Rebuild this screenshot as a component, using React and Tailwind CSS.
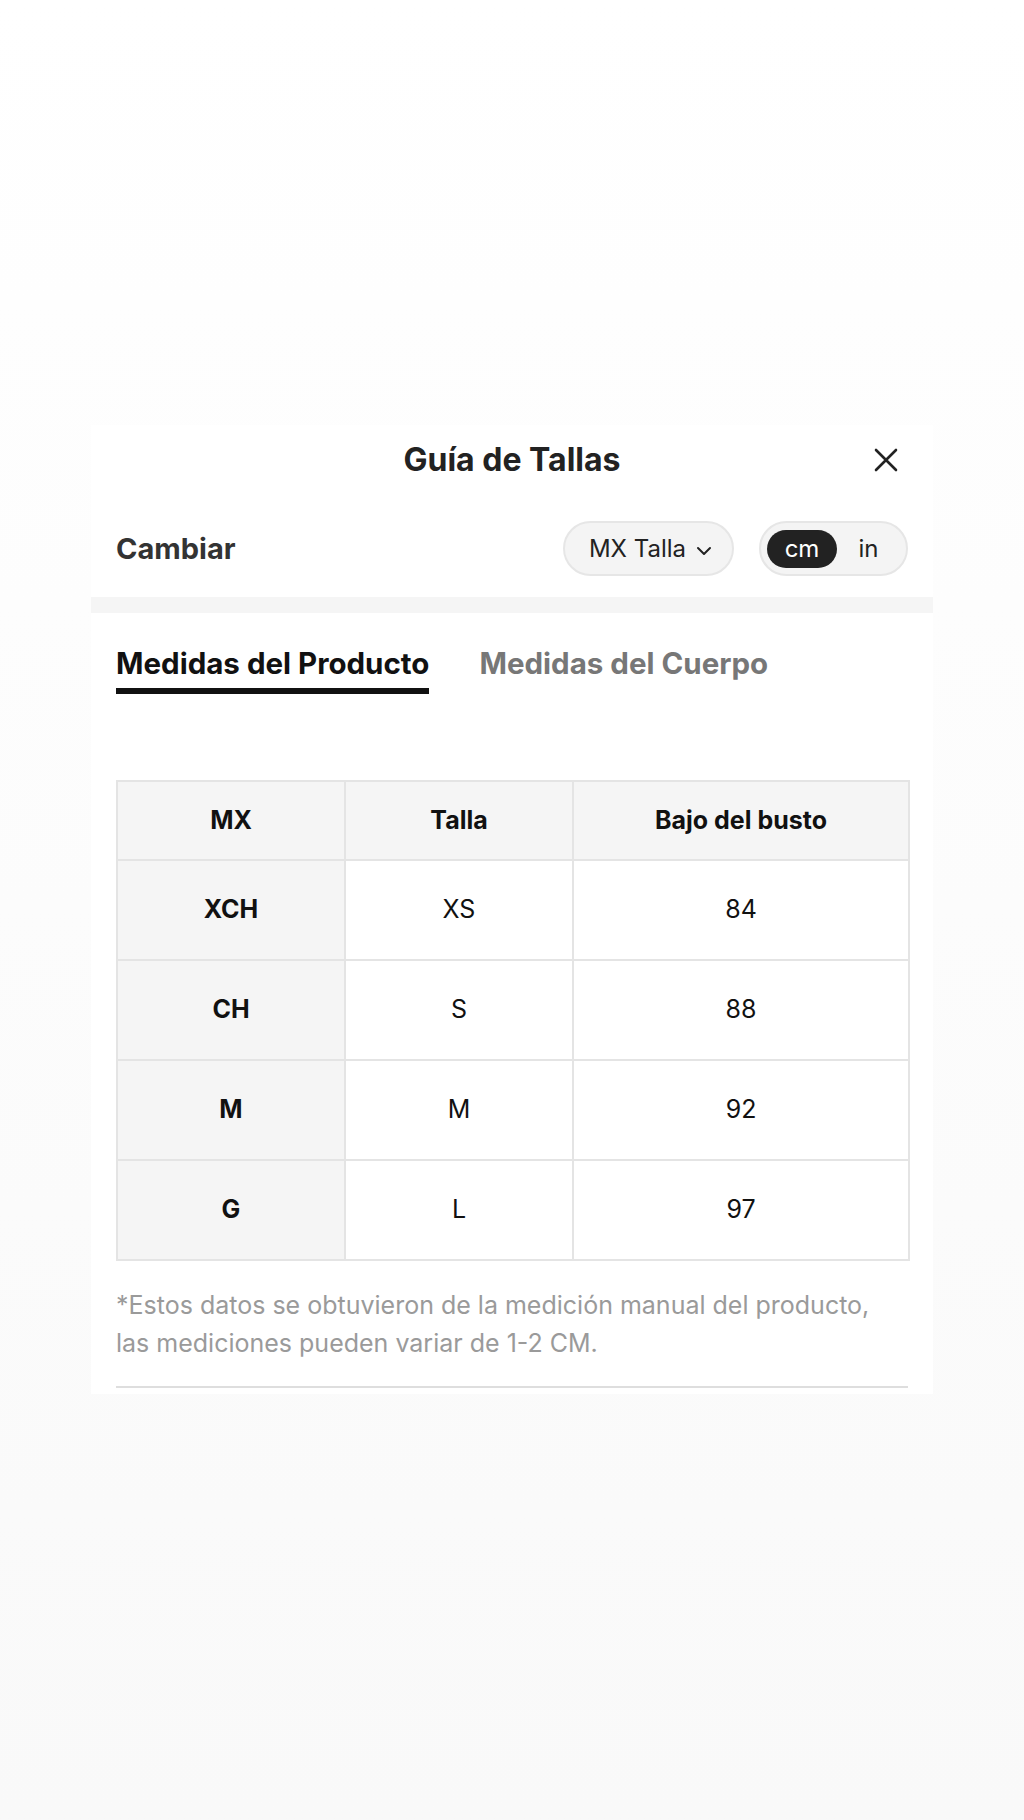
import React from "react";

const rows = [
  { mx: "XCH", talla: "XS", busto: "84" },
  { mx: "CH", talla: "S", busto: "88" },
  { mx: "M", talla: "M", busto: "92" },
  { mx: "G", talla: "L", busto: "97" },
];

const App = () => {
  return (
    <div className="min-h-screen bg-gradient-to-b from-white to-[#f9f9f9] flex justify-center pt-[425px] font-['Inter',sans-serif]">
      <div className="w-[842px] h-[969px] bg-white flex flex-col">
        {/* Header */}
        <div className="relative h-[70px] flex items-center justify-center">
          <h1 className="text-[32px] leading-[40px] font-bold text-[#222]">
            Guía de Tallas
          </h1>
          <button className="absolute right-[34px] top-[22px] w-[26px] h-[26px] flex items-center justify-center">
            <svg width="26" height="26" viewBox="0 0 26 26" fill="none">
              <path
                d="M3 3L23 23M23 3L3 23"
                stroke="#222"
                strokeWidth="2.6"
                strokeLinecap="round"
              />
            </svg>
          </button>
        </div>

        {/* Cambiar row */}
        <div className="flex items-center justify-between px-[25px] pt-[26px] pb-[21px]">
          <span className="text-[29px] leading-[36px] font-bold text-[#333]">
            Cambiar
          </span>
          <div className="flex items-center gap-[25px]">
            <div className="h-[55px] w-[171px] rounded-full bg-[#f4f4f4] border-2 border-[#e6e6e6] flex items-center justify-center gap-[10px] pl-[4px]">
              <span className="text-[24px] text-[#222]">MX Talla</span>
              <svg width="16" height="10" viewBox="0 0 16 10" fill="none" className="mt-[5px]">
                <path
                  d="M2 2L8 8L14 2"
                  stroke="#222"
                  strokeWidth="2"
                  strokeLinecap="round"
                  strokeLinejoin="round"
                />
              </svg>
            </div>
            <div className="h-[55px] w-[149px] rounded-full bg-[#f4f4f4] border-2 border-[#e6e6e6] flex items-center px-[6px]">
              <div className="h-[38px] w-[70px] rounded-full bg-[#222] flex items-center justify-center">
                <span className="text-[24px] text-white">cm</span>
              </div>
              <div className="flex-1 flex items-center justify-center">
                <span className="text-[24px] text-[#222]">in</span>
              </div>
            </div>
          </div>
        </div>

        {/* Gray band */}
        <div className="h-[16px] bg-[#f5f5f5]"></div>

        {/* Tabs */}
        <div className="flex gap-[50px] px-[25px] pt-[34px]">
          <div className="flex flex-col">
            <span className="text-[29.5px] leading-[32px] font-bold text-[#111]">
              Medidas del Producto
            </span>
            <div className="mt-[9px] h-[6px] bg-[#111]"></div>
          </div>
          <span className="text-[29.5px] leading-[32px] font-bold text-[#777]">
            Medidas del Cuerpo
          </span>
        </div>

        {/* Table */}
        <div className="px-[25px] mt-[86px]">
          <table className="w-[792px] border-collapse table-fixed">
            <colgroup>
              <col className="w-[228px]" />
              <col className="w-[228px]" />
              <col className="w-[336px]" />
            </colgroup>
            <thead>
              <tr className="h-[79px] bg-[#f5f5f5]">
                <th className="border-2 border-[#e4e4e4] text-[25px] font-bold text-[#111]">MX</th>
                <th className="border-2 border-[#e4e4e4] text-[25px] font-bold text-[#111]">Talla</th>
                <th className="border-2 border-[#e4e4e4] text-[25px] font-bold text-[#111]">Bajo del busto</th>
              </tr>
            </thead>
            <tbody>
              {rows.map((r) => (
                <tr key={r.mx} className="h-[100px]">
                  <td className="border-2 border-[#e4e4e4] bg-[#f5f5f5] text-center text-[25px] font-bold text-[#111]">
                    {r.mx}
                  </td>
                  <td className="border-2 border-[#e4e4e4] text-center text-[25px] text-[#111]">
                    {r.talla}
                  </td>
                  <td className="border-2 border-[#e4e4e4] text-center text-[25px] text-[#111]">
                    {r.busto}
                  </td>
                </tr>
              ))}
            </tbody>
          </table>
        </div>

        {/* Footnote */}
        <p className="px-[25px] mt-[25px] text-[25px] leading-[38px] text-[#9a9a9a]">
          *Estos datos se obtuvieron de la medición manual del producto,
          <br />
          las mediciones pueden variar de 1-2 CM.
        </p>

        <div className="mx-[25px] mt-[24px] h-[2px] bg-[#dedede]"></div>
      </div>
    </div>
  );
};

export default App;
